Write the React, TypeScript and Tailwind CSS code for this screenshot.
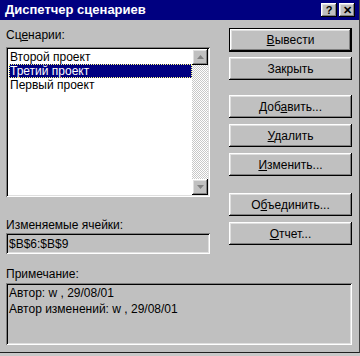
import React from "react";

const raised =
  "shadow-[inset_-1px_-1px_#000,inset_1px_1px_#fff,inset_-2px_-2px_#808080,inset_2px_2px_#dfdfdf]";
const sunken =
  "shadow-[inset_1px_1px_#808080,inset_-1px_-1px_#fff,inset_2px_2px_#000,inset_-2px_-2px_#dfdfdf]";

function U({ children }: { children: React.ReactNode }) {
  return <span className="underline underline-offset-[1px]">{children}</span>;
}

function Btn({
  children,
  isDefault,
}: {
  children: React.ReactNode;
  isDefault?: boolean;
}) {
  if (isDefault) {
    return (
      <div className="h-[24px] border border-black">
        <div
          className={`h-full w-full flex items-center justify-center bg-[#c0c0c0] ${raised}`}
        >
          {children}
        </div>
      </div>
    );
  }
  return (
    <div
      className={`h-[23px] flex items-center justify-center bg-[#c0c0c0] ${raised}`}
    >
      {children}
    </div>
  );
}

function TitleBtn({ children }: { children: React.ReactNode }) {
  return (
    <div
      className={`w-[16px] h-[14px] bg-[#c0c0c0] ${raised} flex items-center justify-center text-black text-[11px] font-bold leading-none`}
    >
      {children}
    </div>
  );
}

function Arrow({ up }: { up?: boolean }) {
  return (
    <div
      className={`w-[16px] h-[16px] bg-[#c0c0c0] ${raised} flex items-center justify-center`}
    >
      <svg width="7" height="4" viewBox="0 0 7 4">
        {up ? (
          <polygon points="3.5,0 7,4 0,4" fill="#808080" />
        ) : (
          <polygon points="0,0 7,0 3.5,4" fill="#808080" />
        )}
      </svg>
    </div>
  );
}

export default function App() {
  return (
    <div
      className="w-[360px] h-[356px] bg-[#c8c8c8] text-black text-[12px] leading-[14px] flex flex-col"
      style={{ fontFamily: '"Liberation Sans", Arial, sans-serif' }}
    >
      <div className="h-[353px] bg-[#c0c0c0] flex flex-col border-r border-r-[#404040] border-b border-b-[#202020]">
        <div className="h-[20px] bg-[#000080] flex items-center pl-[5px] pr-[4px] shrink-0">
          <div className="text-white font-bold text-[13px] flex-1">
            Диспетчер сценариев
          </div>
          <div className="flex gap-[2px]">
            <TitleBtn>?</TitleBtn>
            <TitleBtn>✕</TitleBtn>
          </div>
        </div>

        <div className="flex-1 pl-[6px] pr-[7px] pt-[8px] flex flex-col">
          <div className="flex gap-[19px]">
            <div className="w-[204px] flex flex-col">
              <div className="h-[14px]">
                Сц<U>е</U>нарии:
              </div>
              <div className={`mt-[5px] h-[150px] bg-white ${sunken} p-[2px] flex`}>
                <div className="flex-1 flex flex-col pt-[1px] pl-[1px]">
                  <div className="h-[14px] pl-[1px]">Второй проект</div>
                  <div className="h-[14px] pl-[1px] bg-[#000080] text-white outline outline-1 outline-dotted outline-[#ffff80] -outline-offset-1">
                    Третий проект
                  </div>
                  <div className="h-[14px] pl-[1px]">Первый проект</div>
                </div>
                <div className="w-[16px] flex flex-col bg-[repeating-conic-gradient(#c8c8c8_0%_25%,#ffffff_0%_50%)] bg-[length:2px_2px]">
                  <Arrow up />
                  <div className="flex-1" />
                  <Arrow />
                </div>
              </div>
              <div className="mt-[21px] h-[14px]">Изменяемые ячейки:</div>
              <div className={`mt-[1px] h-[21px] ${sunken} flex items-center px-[3px]`}>
                $B$6:$B$9
              </div>
            </div>

            <div className="flex-1 flex flex-col">
              <Btn isDefault>
                <span>
                  <U>В</U>ывести
                </span>
              </Btn>
              <div className="mt-[5px]">
                <Btn>Закрыть</Btn>
              </div>
              <div className="mt-[15px]">
                <Btn>
                  <span>
                    Доб<U>а</U>вить...
                  </span>
                </Btn>
              </div>
              <div className="mt-[6px]">
                <Btn>
                  <span>
                    <U>У</U>далить
                  </span>
                </Btn>
              </div>
              <div className="mt-[6px]">
                <Btn>
                  <span>
                    <U>И</U>зменить...
                  </span>
                </Btn>
              </div>
              <div className="mt-[17px]">
                <Btn>
                  <span>
                    О<U>б</U>ъединить...
                  </span>
                </Btn>
              </div>
              <div className="mt-[6px]">
                <Btn>
                  <span>
                    <U>О</U>тчет...
                  </span>
                </Btn>
              </div>
            </div>
          </div>

          <div className="mt-[13px] h-[14px]">Примечание:</div>
          <div className={`mt-[2px] h-[62px] ${sunken} px-[3px] py-[3px] flex flex-col gap-[2px]`}>
            <div>Автор: w , 29/08/01</div>
            <div>Автор изменений: w , 29/08/01</div>
          </div>
        </div>
      </div>
    </div>
  );
}
